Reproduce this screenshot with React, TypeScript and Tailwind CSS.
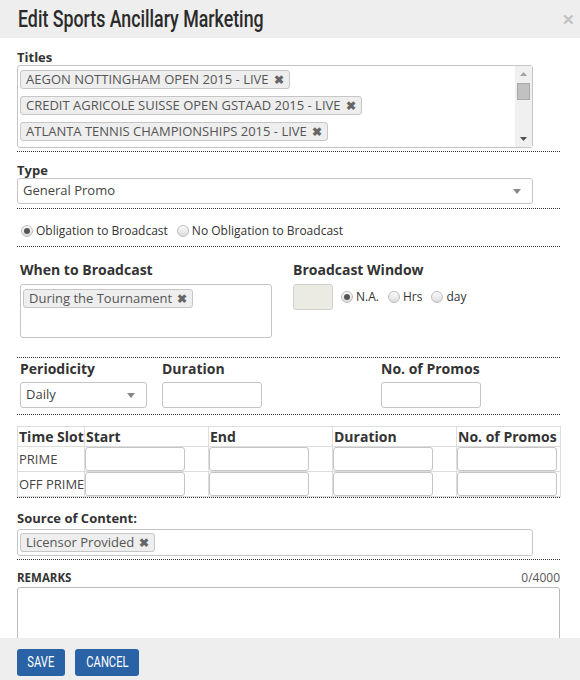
import React from "react";

const Tag = ({ label }: { label: string }) => (
  <span className="inline-flex items-center h-[19px] px-[5px] bg-[#eeeeee] border border-[#c6c6c6] rounded-[3px] text-[13px] leading-none text-[#555] whitespace-nowrap">
    {label}
    <span className="ml-[5px] text-[12px] font-bold text-[#666]">✖</span>
  </span>
);

const Radio = ({ checked, label }: { checked?: boolean; label: string }) => (
  <span className="inline-flex items-center gap-[3px] text-[12px] text-[#333]">
    <span className="w-[12px] h-[12px] rounded-full border border-[#bdbdbd] bg-gradient-to-b from-[#fbfbfb] to-[#dcdcdc] flex items-center justify-center">
      {checked && <span className="w-[6px] h-[6px] rounded-full bg-[#555]" />}
    </span>
    {label}
  </span>
);

const Arrow = () => (
  <svg width="8" height="5" viewBox="0 0 8 5" className="shrink-0">
    <path d="M0 0h8L4 5z" fill="#888" />
  </svg>
);

const TextBox = ({ w }: { w: string }) => (
  <div className={`${w} h-[26px] border border-[#c5c5c5] rounded-[3px] bg-white`} />
);

const slots = ["PRIME", "OFF PRIME"];

export default function App() {
  return (
    <div className="w-[580px] h-[680px] flex flex-col bg-white font-['Open_Sans',sans-serif] text-[#333] overflow-hidden">
      {/* Header */}
      <div className="h-[38px] shrink-0 bg-[#eeeeee] flex items-center justify-between pl-[18px] pr-[5px]">
        <h1 className="font-['Roboto',sans-serif] font-medium text-[24px] leading-none text-[#2a2a2a] whitespace-nowrap origin-left scale-x-[0.74]">
          Edit Sports Ancillary Marketing
        </h1>
        <span className="text-[15px] font-bold text-[#c2c2c2] leading-none">✕</span>
      </div>

      {/* Body */}
      <div className="flex-1 overflow-hidden pl-[17px] pr-[20px]">
        {/* Titles */}
        <div className="pt-[11px] pb-[3px] border-b border-dotted border-[#333]">
          <div className="text-[13px] font-bold leading-[16px]">Titles</div>
          <div className="w-[516px] h-[83px] border border-[#c5c5c5] rounded-[3px] flex">
            <div className="flex-1 flex flex-col items-start gap-[7px] pt-[4px] pl-[2px]">
              <Tag label="AEGON NOTTINGHAM OPEN 2015 - LIVE" />
              <Tag label="CREDIT AGRICOLE SUISSE OPEN GSTAAD 2015 - LIVE" />
              <Tag label="ATLANTA TENNIS CHAMPIONSHIPS 2015 - LIVE" />
            </div>
            <div className="w-[17px] bg-[#f0f0f0] flex flex-col items-center justify-between py-[6px]">
              <div className="flex flex-col items-center gap-[7px]">
                <svg width="7" height="4" viewBox="0 0 7 4">
                  <path d="M0 4h7L3.5 0z" fill="#a3a3a3" />
                </svg>
                <div className="w-[13px] h-[17px] bg-[#c1c1c1] border border-[#a8a8a8]" />
              </div>
              <svg width="7" height="4" viewBox="0 0 7 4">
                <path d="M0 0h7L3.5 4z" fill="#505050" />
              </svg>
            </div>
          </div>
        </div>

        {/* Type */}
        <div className="pt-[10px] pb-[4px] border-b border-dotted border-[#333]">
          <div className="text-[13px] font-bold leading-[16px]">Type</div>
          <div className="w-[516px] h-[26px] border border-[#c5c5c5] rounded-[3px] flex items-center justify-between pl-[5px] pr-[11px] text-[13px] text-[#444]">
            General Promo
            <Arrow />
          </div>
        </div>

        {/* Obligation */}
        <div className="h-[38px] flex items-center gap-[9px] pl-[4px] pt-[6px] border-b border-dotted border-[#333]">
          <Radio checked label="Obligation to Broadcast" />
          <Radio label="No Obligation to Broadcast" />
        </div>

        {/* When / Window */}
        <div className="pt-[13px] pb-[19px] pl-[3px] flex border-b border-dotted border-[#333]">
          <div className="w-[273px]">
            <div className="text-[14px] font-bold leading-[20px] mb-[4px]">When to Broadcast</div>
            <div className="w-[252px] h-[54px] border border-[#c5c5c5] rounded-[3px] pt-[4px] pl-[2px] flex items-start">
              <Tag label="During the Tournament" />
            </div>
          </div>
          <div>
            <div className="text-[14px] font-bold leading-[20px] mb-[4px]">Broadcast Window</div>
            <div className="flex items-center gap-[8px]">
              <div className="w-[40px] h-[26px] border border-[#d0d0d0] rounded-[3px] bg-[#ebebe4]" />
              <div className="flex items-center gap-[9px] -mt-[1px]">
                <Radio checked label="N.A." />
                <Radio label="Hrs" />
                <Radio label="day" />
              </div>
            </div>
          </div>
        </div>

        {/* Periodicity */}
        <div className="pt-[1px] pb-[6px] pl-[3px] flex border-b border-dotted border-[#333]">
          <div className="w-[142px]">
            <div className="text-[14px] font-bold leading-[20px] mb-[3px]">Periodicity</div>
            <div className="w-[127px] h-[26px] border border-[#c5c5c5] rounded-[3px] flex items-center justify-between pl-[5px] pr-[11px] text-[13px] text-[#444]">
              Daily
              <Arrow />
            </div>
          </div>
          <div className="w-[219px]">
            <div className="text-[14px] font-bold leading-[20px] mb-[3px]">Duration</div>
            <TextBox w="w-[100px]" />
          </div>
          <div>
            <div className="text-[14px] font-bold leading-[20px] mb-[3px]">No. of Promos</div>
            <TextBox w="w-[100px]" />
          </div>
        </div>

        {/* Time slots */}
        <div className="pt-[11px] border-b border-dotted border-[#333]">
          <table className="w-[543px] border-collapse table-fixed">
            <colgroup>
              <col className="w-[67px]" />
              <col className="w-[124px]" />
              <col className="w-[124px]" />
              <col className="w-[124px]" />
              <col className="w-[104px]" />
            </colgroup>
            <thead>
              <tr className="h-[20px] text-[14px] font-bold text-left">
                {["Time Slot", "Start", "End", "Duration", "No. of Promos"].map((h) => (
                  <th key={h} className="border border-[#dddddd] px-[1px] py-0 leading-[18px] whitespace-nowrap">
                    {h}
                  </th>
                ))}
              </tr>
            </thead>
            <tbody>
              {slots.map((s) => (
                <tr key={s} className="h-[25px]">
                  <td className="border border-[#dddddd] px-[1px] text-[13px] leading-[16px] text-[#444] whitespace-nowrap">{s}</td>
                  {[0, 1, 2, 3].map((i) => (
                    <td key={i} className="border border-[#dddddd] p-0">
                      <div className="w-[100px] h-[24px] border border-[#c5c5c5] rounded-[3px]" />
                    </td>
                  ))}
                </tr>
              ))}
            </tbody>
          </table>
        </div>

        {/* Source of Content */}
        <div className="pt-[12px] pb-[3px] border-b border-dotted border-[#333]">
          <div className="text-[13px] font-bold leading-[16px] mb-[3px]">Source of Content:</div>
          <div className="w-[516px] h-[27px] border border-[#c5c5c5] rounded-[3px] pt-[3px] pl-[2px] flex items-start">
            <Tag label="Licensor Provided" />
          </div>
        </div>

        {/* Remarks */}
        <div className="pt-[10px]">
          <div className="flex justify-between items-end leading-[16px] mb-[1px]">
            <span className="text-[11.5px] font-bold">REMARKS</span>
            <span className="text-[12px] text-[#555]">0/4000</span>
          </div>
          <div className="w-[543px] h-[80px] border border-[#bbbbbb] rounded-[3px]" />
        </div>
      </div>

      {/* Footer */}
      <div className="h-[42px] shrink-0 bg-[#eeeeee] flex items-start gap-[10px] pl-[17px] pt-[11px]">
        <button className="h-[27px] w-[48px] rounded-[3px] bg-[#2a63a5] text-white flex items-center justify-center">
          <span className="font-['Roboto',sans-serif] text-[14px] scale-x-[0.8]">SAVE</span>
        </button>
        <button className="h-[27px] w-[64px] rounded-[3px] bg-[#2a63a5] text-white flex items-center justify-center">
          <span className="font-['Roboto',sans-serif] text-[14px] scale-x-[0.8]">CANCEL</span>
        </button>
      </div>
    </div>
  );
}
